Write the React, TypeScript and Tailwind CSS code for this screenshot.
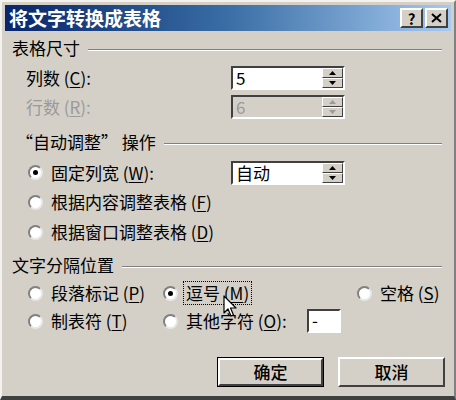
import type { ReactNode } from 'react';

const raised = 'border-2 border-t-white border-l-white border-r-[#404040] border-b-[#404040]';
const sunken = 'border-2 border-t-[#404040] border-l-[#404040] border-r-white border-b-white';

function Key({ k }: { k: string }) {
  return <span className="underline underline-offset-2">{k}</span>;
}

function GroupHeader({ title, className = '' }: { title: ReactNode; className?: string }) {
  return (
    <div className={`flex h-[20px] items-center pr-[9px] ${className}`}>
      <span className="leading-[20px]">{title}</span>
      <div className="ml-[8px] mt-[3px] h-[2px] flex-1 border-t border-t-[#808080] border-b border-b-white" />
    </div>
  );
}

function SpinArrow({ up, dim }: { up?: boolean; dim?: boolean }) {
  return (
    <div className="flex h-[10px] w-full items-center justify-center bg-[#d4d0c8] border border-t-white border-l-white border-r-[#404040] border-b-[#404040]">
      <svg width="7" height="4" viewBox="0 0 7 4">
        <path d={up ? 'M3.5 0 L7 4 L0 4 Z' : 'M0 0 L7 0 L3.5 4 Z'} fill={dim ? '#9a9a9a' : '#000'} />
      </svg>
    </div>
  );
}

function SpinBox({ value, disabled }: { value: string; disabled?: boolean }) {
  return (
    <div className={`flex h-[24px] w-[114px] ${sunken} ${disabled ? 'bg-[#d4d0c8] text-[#9a9a9a]' : 'bg-white text-black'}`}>
      <span className="flex-1 pl-[3px] text-[17px] leading-[20px]">{value}</span>
      <div className="flex w-[21px] flex-col">
        <SpinArrow up dim={disabled} />
        <SpinArrow dim={disabled} />
      </div>
    </div>
  );
}

function Radio({ checked, children, focus }: { checked?: boolean; children: ReactNode; focus?: boolean }) {
  return (
    <div className="flex items-center">
      <div className="flex h-[15px] w-[15px] items-center justify-center rounded-full bg-white border-2 border-t-[#808080] border-l-[#808080] border-r-[#e8e8e8] border-b-[#e8e8e8]">
        {checked && <div className="h-[5px] w-[5px] rounded-full bg-black" />}
      </div>
      <span
        className={`ml-[5px] px-[2px] leading-[22px] ${focus ? 'border border-dotted border-black' : 'border border-transparent'}`}
      >
        {children}
      </span>
    </div>
  );
}

function Cursor() {
  return (
    <svg className="absolute left-[221px] top-[293px]" width="14" height="24" viewBox="0 0 14 24">
      <path d="M1 1 L1 18 L5 14 L8 21 L10.5 20 L7.5 13 L13 13 Z" fill="#fff" stroke="#000" strokeWidth="1.2" strokeLinejoin="round" />
    </svg>
  );
}

export default function App() {
  return (
    <div className="relative h-[400px] w-[456px] overflow-hidden bg-[#d4d0c8] p-[3px] text-[17px] text-black font-['Noto_Sans_CJK_SC','Noto_Sans',sans-serif] border-l-2 border-t-2 border-l-[#f4f2ee] border-t-[#f4f2ee] border-r-2 border-b-4 border-r-[#808080] border-b-[#404040]">
      {/* title bar */}
      <div className="flex h-[26px] items-center bg-gradient-to-r from-[#0a246a] via-[#3a6ea5] to-[#a6caf0] pl-[4px] pr-[3px]">
        <span className="flex-1 text-[19px] font-bold leading-[26px] text-white">将文字转换成表格</span>
        <div className="flex gap-[2px]">
          <div className={`flex h-[20px] w-[23px] items-center justify-center bg-[#d4d0c8] ${raised}`}>
            <span className="text-[15px] font-bold leading-none">?</span>
          </div>
          <div className={`flex h-[20px] w-[23px] items-center justify-center bg-[#d4d0c8] ${raised}`}>
            <svg width="11" height="10" viewBox="0 0 11 10">
              <path d="M1 1 L10 9 M10 1 L1 9" stroke="#000" strokeWidth="2" />
            </svg>
          </div>
        </div>
      </div>

      {/* body */}
      <div className="flex flex-col">
        <GroupHeader title="表格尺寸" className="mt-[7px] pl-[7px]" />

        <div className="mt-[8px] flex h-[24px] items-center pl-[21px]">
          <span className="w-[205px]">
            列数 (<Key k="C" />):
          </span>
          <SpinBox value="5" />
        </div>
        <div className="mt-[5px] flex h-[24px] items-center pl-[21px] text-[#9a9a9a]">
          <span className="w-[205px]">
            行数 (<Key k="R" />):
          </span>
          <SpinBox value="6" disabled />
        </div>

        <GroupHeader title="“自动调整” 操作" className="mt-[13px] pl-[11px]" />

        <div className="mt-[8px] flex h-[25px] items-center pl-[23px]">
          <div className="w-[203px]">
            <Radio checked>
              固定列宽 (<Key k="W" />):
            </Radio>
          </div>
          <SpinBox value="自动" />
        </div>
        <div className="mt-[5px] flex h-[24px] items-center pl-[23px]">
          <Radio>
            根据内容调整表格 (<Key k="F" />)
          </Radio>
        </div>
        <div className="mt-[6px] flex h-[24px] items-center pl-[23px]">
          <Radio>
            根据窗口调整表格 (<Key k="D" />)
          </Radio>
        </div>

        <GroupHeader title="文字分隔位置" className="mt-[11px] pl-[7px]" />

        <div className="mt-[6px] flex h-[24px] items-center pl-[23px]">
          <div className="w-[135px]">
            <Radio>
              段落标记 (<Key k="P" />)
            </Radio>
          </div>
          <div className="w-[194px]">
            <Radio checked focus>
              逗号 (<Key k="M" />)
            </Radio>
          </div>
          <Radio>
            空格 (<Key k="S" />)
          </Radio>
        </div>
        <div className="mt-[4px] flex h-[24px] items-center pl-[23px]">
          <div className="w-[135px]">
            <Radio>
              制表符 (<Key k="T" />)
            </Radio>
          </div>
          <div className="w-[144px]">
            <Radio>
              其他字符 (<Key k="O" />):
            </Radio>
          </div>
          <div className={`h-[24px] w-[34px] bg-white pl-[3px] leading-[18px] ${sunken}`}>-</div>
        </div>

        <div className="mt-[24px] flex justify-end gap-[14px] pr-[6px]">
          <div className="h-[30px] w-[107px] border border-black">
            <div className={`flex h-full w-full items-center justify-center font-medium ${raised}`}>确定</div>
          </div>
          <div className={`flex h-[30px] w-[107px] items-center justify-center font-medium ${raised}`}>取消</div>
        </div>
      </div>

      <Cursor />
    </div>
  );
}
